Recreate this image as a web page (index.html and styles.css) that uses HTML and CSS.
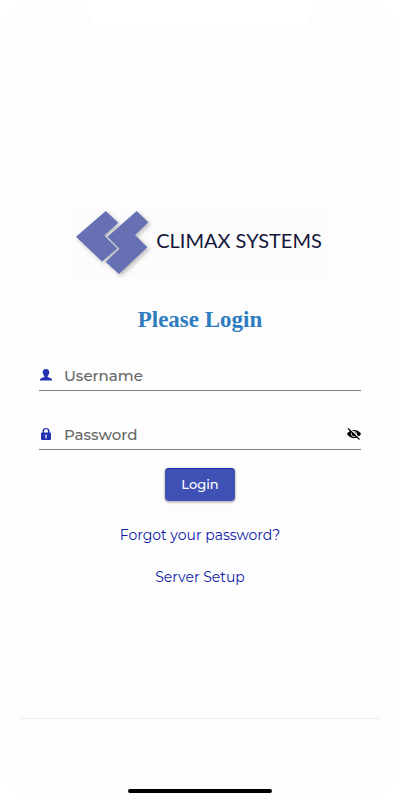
FILE: index.html
```
<!DOCTYPE html>
<html lang="en">
<head>
    <meta charset="UTF-8">
    <meta name="viewport" content="width=device-width, initial-scale=1.0">
    <title>Login - Climax Systems</title>
    <link rel="stylesheet" href="styles.css">
</head>
<body>
    <div class="screen">
        <header class="status-bar">
            <span class="status-time">7:27</span>
            <div class="notch"></div>
            <div class="status-icons">
                <svg width="14" height="10" viewBox="0 0 14 10" fill="none" stroke="#ffffff" stroke-width="2" aria-hidden="true">
                    <path d="M1 3.500 Q7 -1.500 13 3.500 M3.500 6 Q7 3 10.500 6"/>
                    <circle cx="7" cy="8.500" r="0.500"/>
                </svg>
                <svg width="24" height="10" viewBox="0 0 24 10" fill="#ffffff" aria-hidden="true">
                    <rect width="21" height="10" rx="3"/>
                    <rect x="22" y="3" width="2" height="4" rx="1"/>
                </svg>
            </div>
        </header>
        <main class="login-container">
            <div class="logo">
                <svg class="logo-mark" viewBox="0 0 78 70" aria-hidden="true">
                    <g fill="#6670b3">
                        <path d="M32.700 4 L45.300 15.700 L31.300 28.500 L44.300 41.500 L29 54.500 L3 29.700 Z"/>
                        <path d="M63.700 4 L75.300 15.300 L62 28 L74.300 40.300 L46 67 L32.700 55 L46.300 41.700 L34.500 29.700 Z"/>
                    </g>
                </svg>
                <span class="logo-name">CLIMAX SYSTEMS</span>
            </div>
            <h1>Please Login</h1>
            <form id="loginForm" class="login-form">
                <div class="form-group">
                    <label for="username" aria-label="Username">
                        <svg class="field-icon" viewBox="0 0 12 12">
                            <path d="M6 0 C8.200 0 9.300 1.300 9.300 3.300 C9.300 5 8.500 6 7.700 6.900 V8 L11 9.300 Q12 9.700 12 11 V11.500 H0 V11 Q0 9.700 1 9.300 L4.300 8 V6.900 C3.500 6 2.700 5 2.700 3.300 C2.700 1.300 3.800 0 6 0 Z"/>
                        </svg>
                    </label>
                    <input type="text" id="username" placeholder="Username" required>
                </div>
                <div class="form-group">
                    <label for="password" aria-label="Password">
                        <svg class="field-icon" viewBox="0 0 12 12">
                            <path fill-rule="evenodd" d="M2.500 4.500 V3 C2.500 1 4 0 6 0 S9.500 1 9.500 3 V4.500 H10 Q11 4.500 11 5.500 V11 Q11 12 10 12 H2 Q1 12 1 11 V5.500 Q1 4.500 2 4.500 Z M4 4.500 H8 V3 C8 1.800 7.200 1.300 6 1.300 S4 1.800 4 3 Z M5 7.500 L5.500 8.500 V10.500 H6.500 V8.500 L7 7.500 L6 6.600 Z"/>
                        </svg>
                    </label>
                    <input type="password" id="password" placeholder="Password" required>
                    <button type="button" class="toggle-password" id="togglePassword" aria-label="Show password">
                        <svg viewBox="0 0 14 12">
                            <path d="M0 6 C3 0.500 11 0.500 14 6 C11 11.500 3 11.500 0 6 Z"/>
                            <circle cx="7" cy="6" r="2.600" fill="none" stroke="#fdfdfd" stroke-width="0.800"/>
                            <path d="M2.500 0.500 L13 10.500" stroke="#fdfdfd" stroke-width="1.500"/>
                            <path d="M1 0.500 L12.500 11.500" stroke="#000000" stroke-width="1.200"/>
                        </svg>
                    </button>
                </div>
                <button type="submit" class="btn">Login</button>
            </form>
            <nav class="links">
                <a href="#forgot">Forgot your password?</a>
                <a href="#server">Server Setup</a>
            </nav>
        </main>
        <footer class="footer">
            <div class="home-indicator"></div>
        </footer>
    </div>

    <script>
        document.getElementById('togglePassword').addEventListener('click', () => {
            const field = document.getElementById('password');
            field.type = field.type === 'password' ? 'text' : 'password';
        });
    </script>
</body>
</html>
```

FILE: styles.css
```
* {
    margin: 0;
    padding: 0;
    box-sizing: border-box;
}

body {
    font-family: 'Montserrat', 'Inter', sans-serif;
    background: #ffffff;
    color: #1a1a1a;
}

.screen {
    min-height: 100vh;
    display: flex;
    flex-direction: column;
    background: #fdfdfd;
    border-radius: 40px;
}

.status-bar {
    display: grid;
    grid-template-columns: 1fr 56% 1fr;
    grid-template-rows: 29px;
}

.status-time {
    padding: 12px 0 0 12px;
    text-align: center;
    font-family: 'Inter', sans-serif;
    font-size: 14px;
    line-height: 20px;
    color: #ffffff;
}

.notch {
    background: #ffffff;
    border-radius: 0 0 20px 20px;
}

.status-icons {
    display: flex;
    justify-content: center;
    align-items: flex-end;
    gap: 6px;
    padding-bottom: 2px;
}

.login-container {
    flex: 1;
    display: flex;
    flex-direction: column;
    align-items: center;
    padding: 178px 39px 0;
}

.logo {
    display: flex;
    align-items: center;
    gap: 5px;
    padding-right: 5px;
    background: #fcfcfc;
}

.logo-mark {
    width: 78px;
    height: 70px;
    filter: drop-shadow(2px 2px 2px rgba(0, 0, 0, 0.25));
}

.logo-name {
    font-family: 'Lato', sans-serif;
    font-size: 20px;
    line-height: 24px;
    padding-bottom: 4px;
    color: #14163a;
    white-space: nowrap;
}

h1 {
    margin-top: 28px;
    font-family: 'Liberation Serif', serif;
    font-size: 23px;
    line-height: 30px;
    color: #2e7cc0;
}

.login-form {
    width: 100%;
    margin-top: 28px;
    display: flex;
    flex-direction: column;
    align-items: center;
}

.form-group {
    width: 100%;
    height: 28px;
    margin-bottom: 31px;
    padding-bottom: 2px;
    display: flex;
    align-items: center;
    border-bottom: 1px solid #808080;
}

.form-group label {
    display: flex;
    margin-right: 12px;
    padding: 0 0 2px 1px;
}

.field-icon {
    width: 12px;
    height: 12px;
    fill: #2532b0;
}

.form-group input {
    flex: 1;
    min-width: 0;
    border: none;
    outline: none;
    background: transparent;
    font-family: inherit;
    font-size: 15px;
    font-weight: 500;
    color: #333333;
}

.form-group input::placeholder {
    color: #666666;
    opacity: 1;
}

.toggle-password {
    display: flex;
    padding-bottom: 2px;
    border: none;
    background: transparent;
    cursor: pointer;
}

.toggle-password svg {
    width: 14px;
    height: 12px;
}

.btn {
    height: 33px;
    padding: 0 16px 2px;
    margin-top: -13px;
    background: #3f51b5;
    color: #ffffff;
    border: none;
    border-top: 1px solid #1b27a8;
    border-radius: 4px;
    box-shadow: 0 1px 3px rgba(0, 0, 0, 0.4);
    font-family: inherit;
    font-size: 13px;
    font-weight: 500;
    cursor: pointer;
}

.links {
    margin-top: 24px;
    display: flex;
    flex-direction: column;
    align-items: center;
    gap: 22px;
}

.links a {
    color: #0f1aa8;
    font-size: 14px;
    line-height: 20px;
    text-decoration: none;
}

.footer {
    height: 82px;
    margin: 0 20px;
    padding-bottom: 7px;
    display: flex;
    align-items: flex-end;
    justify-content: center;
    border-top: 1px solid #eeeeee;
}

.home-indicator {
    width: 40%;
    height: 4px;
    background: #000000;
    border-radius: 2px;
}
```
